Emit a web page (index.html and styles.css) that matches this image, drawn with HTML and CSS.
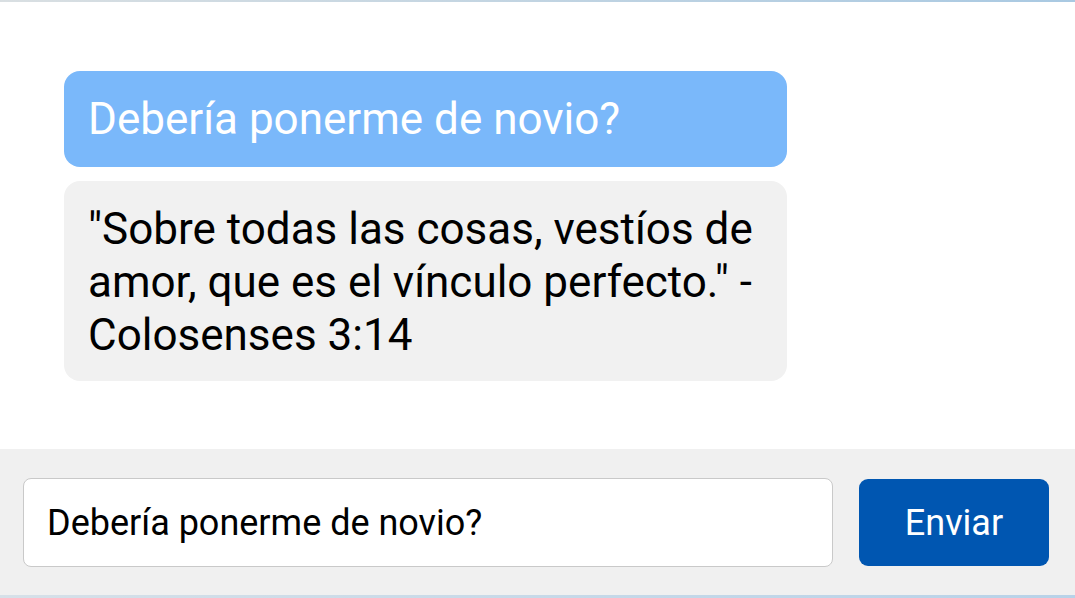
FILE: index.html
```html
<!DOCTYPE html>
<html lang="es">
<head>
<meta charset="utf-8">
<title>Chat</title>
<link rel="stylesheet" href="styles.css">
</head>
<body>
<div class="app">
  <div class="topline"></div>
  <main class="chat">
    <div class="bubble user">Debería ponerme de novio?</div>
    <div class="bubble bot">"Sobre todas las cosas, vestíos de amor, que es el vínculo perfecto." - Colosenses 3:14</div>
  </main>
  <form class="composer">
    <input class="field" type="text" value="Debería ponerme de novio?">
    <button class="send" type="button">Enviar</button>
  </form>
  <div class="bottomline"></div>
</div>
</body>
</html>
```
FILE: styles.css
```css
* { box-sizing: border-box; }
html, body { margin: 0; padding: 0; background: #fff; }
body { font-family: Roboto, "Noto Sans", sans-serif; }
.app {
  width: 1075px;
  height: 598px;
  display: flex;
  flex-direction: column;
  overflow: hidden;
}
.topline {
  height: 2px;
  background: linear-gradient(to right, #d9dfe2, #a9c9e2);
}
.chat {
  flex: 1;
  padding: 69px 288px 0 64px;
  display: flex;
  flex-direction: column;
  gap: 14px;
}
.bubble {
  border-radius: 16px;
  font-size: 44px;
}
.user {
  background: #7ab8fa;
  color: #fff;
  line-height: 52px;
  padding: 22px 24px 22px;
}
.bot {
  background: #f1f1f1;
  color: #000;
  line-height: 53px;
  padding: 22px 16px 19px 24px;
}
.composer {
  margin: 0;
  height: 146px;
  background: #f0f0f0;
  display: flex;
  align-items: flex-start;
  gap: 26px;
  padding: 29px 26px 0 23px;
}
.field {
  width: 810px;
  height: 89px;
  border: 1px solid #c9c9c9;
  border-radius: 8px;
  background: #fff;
  padding: 0 0 0 23px;
  font-family: Roboto, "Noto Sans", sans-serif;
  font-size: 36px;
  color: #000;
  outline: none;
}
.send {
  margin-top: 1px;
  width: 190px;
  height: 87px;
  border: 0;
  border-radius: 9px;
  background: #0056b1;
  color: #fff;
  font-family: Roboto, "Noto Sans", sans-serif;
  font-size: 36px;
  padding: 0;
}
.bottomline {
  height: 3px;
  background: linear-gradient(to right, #d6e0e8, #b8d2e8);
}
```
